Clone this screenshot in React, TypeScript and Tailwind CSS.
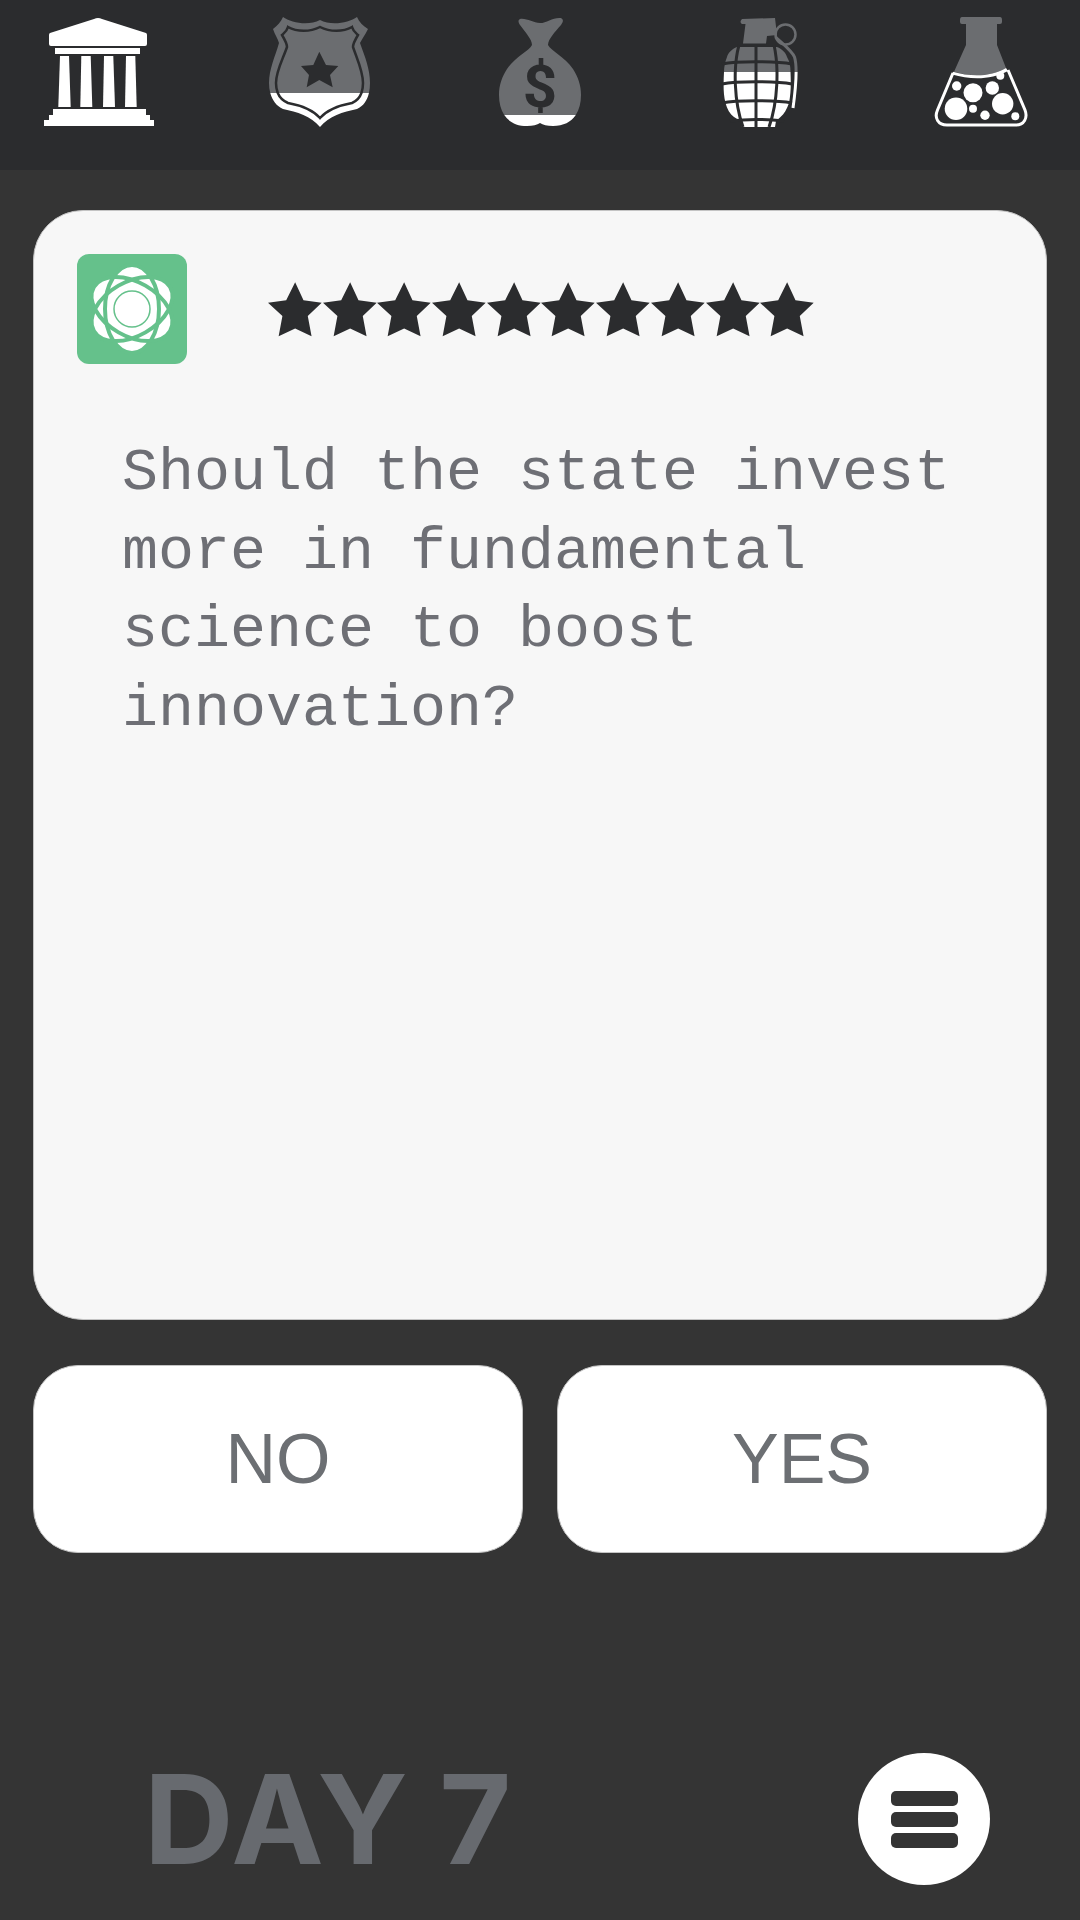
const DARK = '#2b2c2e';
const GRAY = '#6b6d70';
const GREEN = '#65c18b';

// gray above the split line, white below it
function LevelIcon({ id, split, children }: { id: string; split: number; children: React.ReactNode }) {
  return (
    <svg viewBox="0 0 110 110" className="w-[110px] h-[110px]">
      <defs>
        <clipPath id={`${id}-top`}><rect x="0" y="0" width="110" height={split} /></clipPath>
        <clipPath id={`${id}-bottom`}><rect x="0" y={split} width="110" height={110 - split} /></clipPath>
      </defs>
      <g clipPath={`url(#${id}-top)`} fill={GRAY} stroke={GRAY} strokeWidth="0">{children}</g>
      <g clipPath={`url(#${id}-bottom)`} fill="#ffffff" stroke="#ffffff" strokeWidth="0">{children}</g>
    </svg>
  );
}

function BankIcon() {
  return (
    <svg viewBox="0 0 110 110" className="w-[110px] h-[110px]" fill="#ffffff">
      <path d="M50 2 Q54 0 58 2 L102 16 Q103 16.500 103 18 L103 27 Q103 29 101 29 L7 29 Q5 29 5 27 L5 18 Q5 16.500 6 16 Z" />
      <rect x="11" y="31" width="85" height="6" />
      <path d="M16 39 L25 39 L26.700 90 L14.300 90 Z" />
      <path d="M37.300 39 L46.700 39 L48.300 90 L36.300 90 Z" />
      <path d="M60 39 L69.300 39 L71 90 L59 90 Z" />
      <path d="M82 39 L91.300 39 L92.700 90 L81 90 Z" />
      <rect x="9" y="92" width="93" height="7" />
      <rect x="5" y="98" width="101" height="6" />
      <rect x="0" y="103" width="110" height="6" />
    </svg>
  );
}

function ShieldIcon() {
  return (
    <LevelIcon id="shield" split={76}>
      <path d="M18 0 C26 6 44 9 55 3 C66 9 84 6 92 0 C94 5 98 9 103 12 C100 18 97 22 95 26 C100 40 105 52 105 66 C105 78 101 88 92 92 C78 95 64 99 55 110 C46 99 32 95 18 92 C9 88 4 78 4 66 C4 52 10 40 14 26 C13 22 10 18 8 12 C12 9 16 5 18 0 Z" />
      <path
        d="M23 10 C32 15 45 15 55 10 C65 15 78 15 87 10 C88 14 91 16 93 18 C90 23 88 27 88 30 C92 42 98 54 98 66 C98 76 94 83 87 86 C76 88 63 92 55 101 C47 92 34 88 23 86 C16 83 11 76 11 66 C11 54 18 42 22 30 C22 27 20 23 17 18 C19 16 22 14 23 10 Z"
        fill="none"
        stroke={DARK}
        strokeWidth="2.500"
      />
      <path d="M54.300 34.700 L61 48 L73.300 49 L65 58 L67.700 70.300 L54.300 63 L41.700 70.300 L44 58 L36 49 L48.300 48 Z" fill={DARK} />
    </LevelIcon>
  );
}

function BagIcon() {
  return (
    <LevelIcon id="bag" split={98}>
      <path d="M35 2 C42 1 48 6 55 6 C62 6 68 0 76 1 C79 3 78 5 76 8 C70 15 63 22 63 28 C66 34 80 40 88 52 C93 60 96 68 96 78 C96 97 86 109 68 109 C62 109 58 108 55 106 C52 108 48 109 42 109 C24 109 14 97 14 78 C14 68 17 60 22 52 C30 40 44 34 47 28 C47 22 40 15 35 8 C33 5 33 3 35 2 Z" />
      <text x="55" y="90" textAnchor="middle" fontSize="60" fontWeight="700" fontFamily="Roboto, sans-serif" fill={DARK}>$</text>
    </LevelIcon>
  );
}

function GrenadeIcon() {
  return (
    <LevelIcon id="grenade" split={55}>
      <path d="M36 2 L69 1 L71 18 L61 19 L60 26.500 L37 26.500 L39.500 7 L36 7 Q33 5 36 2 Z" />
      <circle cx="79.500" cy="17.500" r="10" fill="none" stroke={GRAY} strokeWidth="2.500" />
      <path d="M69.500 20 C78 28 86 34 88.500 40 C91 48 91 62 87 91" fill="none" strokeWidth="3" style={{ stroke: 'inherit' }} />
      <path d="M31 30 L71 30 C76 32 80 36 81 40 C84 45 84.500 50 84.500 55 C85 66 85 76 83 86 C81 92 78 97 74.500 100 L70 104 L69 110 L36 110 L34.500 104 L28 100 C24 97 21 92 19.500 86 C17 76 17.500 66 18 55 C18 50 19 45 21 40 C22 36 26 32 31 30 Z" />
      <g fill="none" stroke={DARK} strokeWidth="3">
        <path d="M50 28 L50 110" />
        <path d="M33 28 C27 50 28 85 37 110" />
        <path d="M68 28 C73 50 72 85 63 110" />
        <path d="M16 47 C30 44 70 44 86 47" />
        <path d="M16 67 C30 64 70 64 86 67" />
        <path d="M16 86 C30 83 70 83 86 86" />
        <path d="M24 104 C40 102 60 102 78 104" />
      </g>
    </LevelIcon>
  );
}

function FlaskIcon() {
  return (
    <svg viewBox="0 0 110 110" className="w-[110px] h-[110px]">
      <path d="M36 0 L74 0 Q76 0 76 3 L76 5 Q76 7 74 7 L71 7 L71 28 L80 51 C65 60 45 60 28 54.700 L40 28 L40 7 L36 7 Q34 7 34 5 L34 3 Q34 0 36 0 Z" fill={GRAY} />
      <path d="M27 56 L11.500 93 C8 101 12 108 21 108 L90 108 C98 108 102 101 99 93 L82 53" fill="none" stroke="#ffffff" strokeWidth="3" />
      <path d="M27 54.700 C45 60 65 60 80 51 L82 54 C65 63 45 63 26 57.500 Z" fill="#ffffff" />
      <g fill="#ffffff">
        <circle cx="30.700" cy="69" r="4.700" />
        <circle cx="47" cy="75.700" r="9.500" />
        <circle cx="66.300" cy="71" r="6.700" />
        <circle cx="74.300" cy="58.700" r="4" />
        <circle cx="30" cy="91.700" r="11.300" />
        <circle cx="47" cy="91.700" r="4" />
        <circle cx="76.700" cy="86.700" r="10.700" />
        <circle cx="59" cy="98.300" r="4.700" />
        <circle cx="89.300" cy="99.300" r="4" />
      </g>
    </svg>
  );
}

// white petals with the three orbits crossing over them as green bands
function AtomLogo() {
  const rotations = [0, 60, 120];
  return (
    <div className="w-[110px] h-[110px] rounded-[12px] bg-[#65c18b] shrink-0">
      <svg viewBox="0 0 110 110" className="w-full h-full">
        {rotations.map((rot) => (
          <ellipse key={rot} cx="55" cy="55" rx="28" ry="45" transform={`rotate(${rot} 55 55)`} fill="#ffffff" />
        ))}
        {rotations.map((rot) => (
          <ellipse key={rot} cx="55" cy="55" rx="27" ry="44" transform={`rotate(${rot} 55 55)`} fill="none" stroke={GREEN} strokeWidth="4" />
        ))}
        <circle cx="55" cy="55" r="18" fill="#ffffff" stroke={GREEN} strokeWidth="1.500" />
      </svg>
    </div>
  );
}

function Star() {
  return (
    <svg viewBox="0 0 55 55" className="w-[54.700px] h-[55px] shrink-0">
      <path d="M27.300 0 L35.700 18.300 L54 20.700 L40 34 L43.800 54.500 L27.300 46.700 L10.700 54.500 L14.500 34 L0 20.700 L18.300 18.300 Z" fill={DARK} />
    </svg>
  );
}

function AnswerButton({ label }: { label: string }) {
  return (
    <button className="h-[188px] rounded-[45px] bg-white border border-[#c4c4c4] flex items-center justify-center text-[70px] text-[#6c6f73] font-['Liberation_Sans',sans-serif]">
      {label}
    </button>
  );
}

export default function App() {
  return (
    <div className="w-[1080px] h-[1920px] bg-[#343434] overflow-hidden">
      <header className="h-[170px] bg-[#2b2c2e] flex justify-between items-start px-[44px] pt-[17px]">
        <BankIcon />
        <ShieldIcon />
        <BagIcon />
        <GrenadeIcon />
        <FlaskIcon />
      </header>

      <main className="px-[33px] pt-[40px]">
        <section className="h-[1110px] rounded-[50px] bg-[#f7f7f7] border border-[#c4c4c4] pt-[43px] pl-[43px]">
          <div className="flex items-center gap-[81px]">
            <AtomLogo />
            <div className="flex">
              {Array.from({ length: 10 }).map((_, i) => (
                <Star key={i} />
              ))}
            </div>
          </div>
          <p className="mt-[70px] ml-[45px] w-[860px] text-[60px] leading-[78.500px] text-[#6e6f75] font-['Liberation_Mono',monospace]">
            Should the state invest more in fundamental science to boost innovation?
          </p>
        </section>

        <div className="mt-[45px] grid grid-cols-2 gap-[34px]">
          <AnswerButton label="NO" />
          <AnswerButton label="YES" />
        </div>

        <footer className="mt-[200px] pl-[111px] pr-[57px] flex items-center justify-between">
          <span className="text-[124px] leading-none font-bold tracking-[3px] text-[#676a6f] [word-spacing:-4px] font-['Inter',sans-serif]">
            DAY 7
          </span>
          <button className="w-[132px] h-[132px] rounded-full bg-white flex flex-col items-center justify-center gap-[6px]">
            <span className="w-[67px] h-[15px] rounded-[5px] bg-[#343434]" />
            <span className="w-[67px] h-[15px] rounded-[5px] bg-[#343434]" />
            <span className="w-[67px] h-[15px] rounded-[5px] bg-[#343434]" />
          </button>
        </footer>
      </main>
    </div>
  );
}
